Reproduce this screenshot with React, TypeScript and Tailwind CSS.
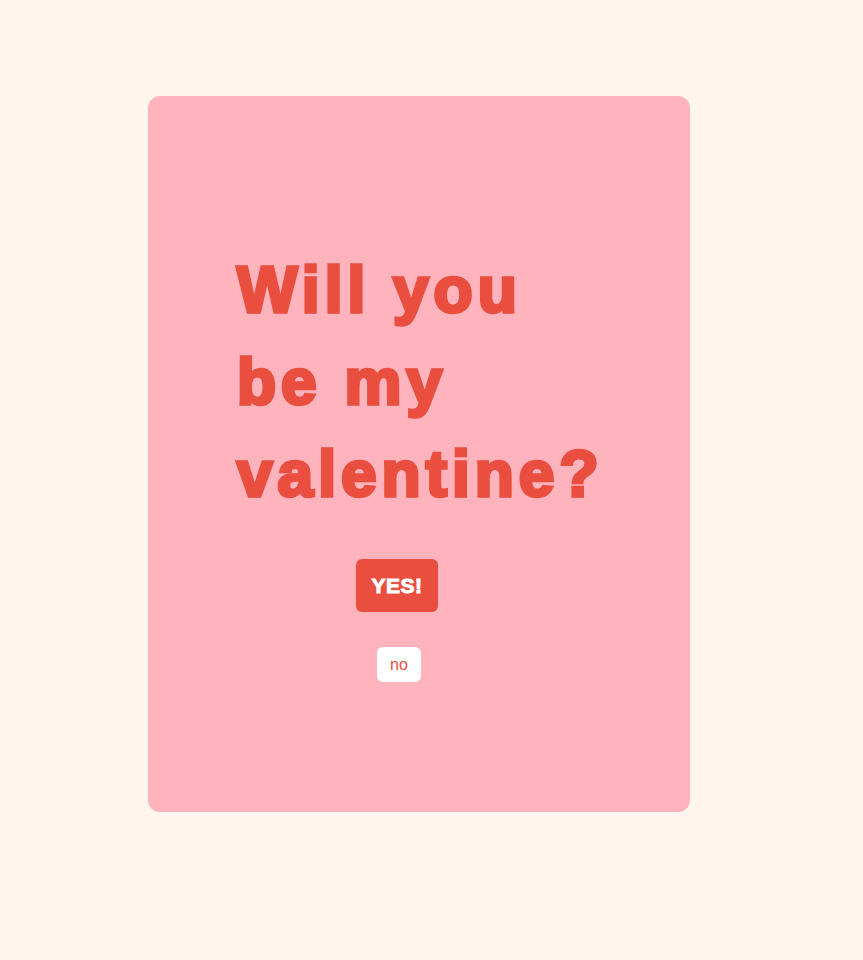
export default function App() {
  return (
    <div className="min-h-screen bg-[#fef5ec] pt-24" style={{ fontFamily: '"Liberation Sans", Arial, sans-serif' }}>
      <div className="ml-[148px] h-[716px] w-[542px] rounded-xl bg-[#ffb3bd] pl-[87px] pt-[148px]">
        <div className="flex w-[324px] flex-col items-center">
          <h1 className="w-full whitespace-nowrap pl-[2px] text-[64px] font-bold leading-[92px] tracking-[5px] text-[#e94e3f] [-webkit-text-stroke:3.5px_#e94e3f]">
            Will you
            <br />
            be my
            <br />
            valentine?
          </h1>
          <button className="mt-[39px] h-[53px] w-[82px] rounded-md bg-[#e94e3f] text-[21px] font-bold tracking-[0.5px] text-white [-webkit-text-stroke:1px_#fff]">
            YES!
          </button>
          <button className="ml-1 mt-[35px] h-[35px] w-[44px] rounded-md bg-white text-base text-[#e94e3f]">
            no
          </button>
        </div>
      </div>
    </div>
  );
}
